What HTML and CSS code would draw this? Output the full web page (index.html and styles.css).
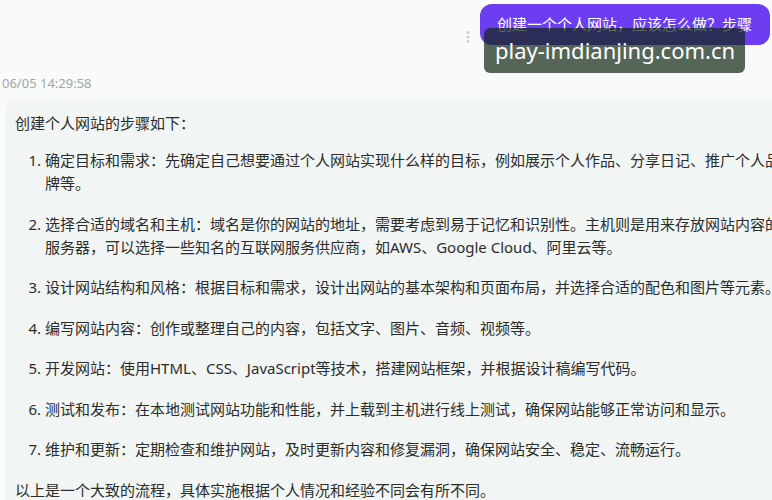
FILE: index.html
```html
<!DOCTYPE html>
<html lang="zh-CN">
<head>
<meta charset="utf-8">
<title>创建个人网站</title>
<link rel="stylesheet" href="styles.css">
</head>
<body>
<div class="chat">
  <div class="user-row">
    <span class="more" aria-label="更多">
      <svg width="4" height="12" viewBox="0 0 4 12"><circle cx="2" cy="1.5" r="1.3"/><circle cx="2" cy="6" r="1.3"/><circle cx="2" cy="10.5" r="1.3"/></svg>
    </span>
    <div class="bubble">创建一个个人网站，应该怎么做？步骤</div>
  </div>
  <div class="time">06/05 14:29:58</div>
  <div class="answer">
    <p>创建个人网站的步骤如下：</p>
    <ol>
      <li>确定目标和需求：先确定自己想要通过个人网站实现什么样的目标，例如展示个人作品、分享日记、推广个人品牌等。</li>
      <li>选择合适的域名和主机：域名是你的网站的地址，需要考虑到易于记忆和识别性。主机则是用来存放网站内容的服务器，可以选择一些知名的互联网服务供应商，如AWS、Google Cloud、阿里云等。</li>
      <li>设计网站结构和风格：根据目标和需求，设计出网站的基本架构和页面布局，并选择合适的配色和图片等元素。</li>
      <li>编写网站内容：创作或整理自己的内容，包括文字、图片、音频、视频等。</li>
      <li>开发网站：使用HTML、CSS、JavaScript等技术，搭建网站框架，并根据设计稿编写代码。</li>
      <li>测试和发布：在本地测试网站功能和性能，并上载到主机进行线上测试，确保网站能够正常访问和显示。</li>
      <li>维护和更新：定期检查和维护网站，及时更新内容和修复漏洞，确保网站安全、稳定、流畅运行。</li>
    </ol>
    <p>以上是一个大致的流程，具体实施根据个人情况和经验不同会有所不同。</p>
  </div>
  <div class="watermark">play-imdianjing.com.cn</div>
</div>
</body>
</html>
```
FILE: styles.css
```css
html, body {
  margin: 0;
  padding: 0;
}
body {
  width: 772px;
  height: 500px;
  overflow: hidden;
  background: #f9fbfa;
  font-family: "Noto Sans", "Noto Sans CJK SC", sans-serif;
  color: #2b2d2c;
}
.chat {
  position: relative;
  padding-top: 4px;
}
.user-row {
  display: flex;
  justify-content: flex-end;
  align-items: flex-end;
  gap: 10px;
  margin-right: 2px;
}
.more {
  display: flex;
  margin-bottom: 2px;
}
.more svg {
  fill: #c4c8c6;
}
.bubble {
  background: #6c3df0;
  color: #ffffff;
  font-size: 15px;
  line-height: 21px;
  padding: 10px 18px 10px 17px;
  border-radius: 12px;
  white-space: nowrap;
}
.time {
  margin-top: 29px;
  padding-left: 2px;
  font-size: 13px;
  line-height: 18px;
  color: #a3a6a5;
}
.answer {
  margin-top: 8px;
  margin-left: 5px;
  width: 770px;
  padding: 12px 10px;
  background: #f1f5f3;
  border-radius: 8px;
  font-size: 15px;
  line-height: 23px;
}
.answer p {
  margin: 0;
}
.answer ol {
  margin: 14px 0 18px;
  padding-left: 30px;
}
.answer li + li {
  margin-top: 17.5px;
}
.watermark {
  position: absolute;
  left: 484px;
  top: 28px;
  width: 261px;
  height: 45px;
  box-sizing: border-box;
  padding-left: 11px;
  border-radius: 6px;
  background: rgba(16, 38, 20, 0.7);
  color: #ffffff;
  font-family: "Noto Sans", sans-serif;
  font-size: 22px;
  line-height: 45px;
}
```
